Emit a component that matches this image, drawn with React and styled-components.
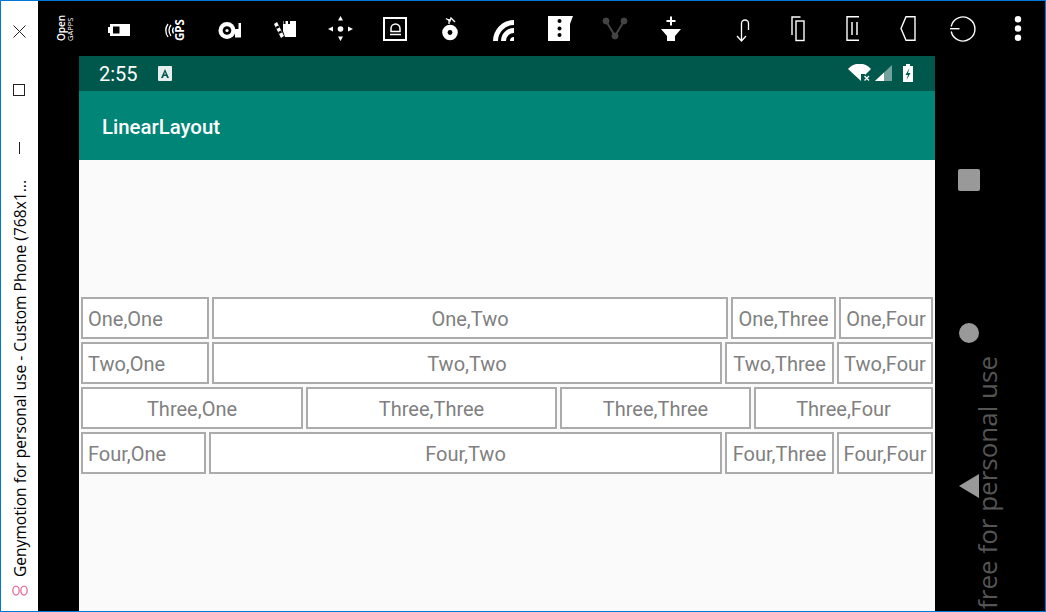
import React from "react";
import styled, { createGlobalStyle } from "styled-components";

const GlobalStyle = createGlobalStyle`
  html, body {
    margin: 0;
    padding: 0;
    background: #000;
  }
`;

const Frame = styled.div`
  display: flex;
  box-sizing: border-box;
  position: relative;
  width: 1046px;
  height: 612px;
  overflow: hidden;
  border: 1px solid #0078d7;
  background: #000;
`;

const TitleBar = styled.div`
  display: flex;
  flex-direction: column;
  align-items: center;
  flex: 0 0 37px;
  background: #fff;
`;

const WindowButton = styled.svg`
  flex: none;
  width: 37px;
  height: ${(p) => p.$h}px;
`;

const TitleText = styled.div`
  display: flex;
  align-items: center;
  gap: 8px;
  margin-top: 21px;
  writing-mode: vertical-rl;
  transform: rotate(180deg);
  font-family: "Open Sans", sans-serif;
  font-size: 15.6px;
  color: #000;
  white-space: nowrap;
`;

const Main = styled.div`
  display: flex;
  flex-direction: column;
  flex: 1;
  min-width: 0;
`;

const ToolBar = styled.div`
  display: flex;
  justify-content: space-between;
  flex: 0 0 55px;
`;

const ToolGroup = styled.div`
  display: flex;
`;

const Body = styled.div`
  display: flex;
  flex: 1;
  min-height: 0;
`;

const Gutter = styled.div`
  flex: 0 0 41px;
`;

const Phone = styled.div`
  display: flex;
  flex-direction: column;
  flex: 0 0 856px;
  background: #fafafa;
`;

const StatusBar = styled.div`
  display: flex;
  align-items: center;
  flex: 0 0 35px;
  padding-left: 20px;
  background: #00574b;
  color: #fff;
  font-family: Roboto, sans-serif;
  font-size: 20px;
`;

const Clock = styled.span`
  width: 59px;
`;

const AppBar = styled.div`
  display: flex;
  align-items: center;
  flex: 0 0 69px;
  padding: 2px 0 0 23px;
  box-sizing: border-box;
  background: #008577;
  color: #fff;
  font-family: Roboto, sans-serif;
  font-size: 20.4px;
  font-weight: 500;
`;

const Content = styled.div`
  display: flex;
  flex-direction: column;
  gap: 3px;
  flex: 1;
  padding: 137px 2px 0;
`;

const Row = styled.div`
  display: flex;
  gap: 3px;
`;

const Cell = styled.div`
  display: flex;
  align-items: center;
  justify-content: ${(p) => (p.$left ? "flex-start" : "center")};
  box-sizing: border-box;
  flex: 0 0 ${(p) => p.$w}px;
  height: 42px;
  padding: 2px 0 0 ${(p) => (p.$left ? 5 : 0)}px;
  border: 2px solid #ababab;
  background: #fff;
  color: #808080;
  font-family: Roboto, sans-serif;
  font-size: 20px;
  white-space: nowrap;
`;

const NavColumn = styled.div`
  display: flex;
  flex-direction: column;
  align-items: center;
  flex: 0 0 68px;
  padding-top: 113px;
`;

const NavSquare = styled.div`
  width: 22px;
  height: 22px;
  border-radius: 2px;
  background: #999;
`;

const NavCircle = styled.div`
  width: 20px;
  height: 20px;
  margin-top: 132px;
  border-radius: 50%;
  background: #999;
`;

const NavBack = styled.div`
  width: 20px;
  height: 24px;
  margin-top: 131px;
  background: #999;
  clip-path: polygon(100% 0, 100% 100%, 0 50%);
`;

const Watermark = styled.div`
  position: absolute;
  right: 43px;
  top: 355px;
  writing-mode: vertical-rl;
  transform: rotate(180deg);
  font-family: "Open Sans", sans-serif;
  font-size: 26px;
  font-weight: 500;
  line-height: 30px;
  color: #555;
  white-space: nowrap;
`;

const Slot = styled.svg`
  flex: none;
  width: 55px;
  height: 55px;
`;

const SlotLabel = styled.text`
  font-family: "Open Sans", sans-serif;
  font-weight: ${(p) => p.$weight || 600};
  font-size: ${(p) => p.$size}px;
  fill: #fff;
`;

const Tool = ({ x, children }) => (
  <Slot viewBox={`${x} 1 55 55`}>{children}</Slot>
);

const rows = [
  [["One,One", 128, true], ["One,Two", 516], ["One,Three", 105], ["One,Four", 94]],
  [["Two,One", 128, true], ["Two,Two", 510], ["Two,Three", 109], ["Two,Four", 96]],
  [["Three,One", 222], ["Three,Three", 251], ["Three,Three", 191], ["Three,Four", 179]],
  [["Four,One", 125, true], ["Four,Two", 513], ["Four,Three", 109], ["Four,Four", 96]],
];

const leftTools = [
  <>
    <SlotLabel $size={10} x={0} y={0} transform="translate(65 41) rotate(-90)">Open</SlotLabel>
    <SlotLabel $size={7.5} $weight={400} x={0} y={0} transform="translate(73 41) rotate(-90)">GAPPS</SlotLabel>
  </>,
  <>
    <path d="M110 24h20v12h-20v-3h-2v-6h2z" fill="#fff" />
    <rect x="113" y="26.5" width="6.5" height="7" fill="#000" />
  </>,
  <>
    <g fill="none" stroke="#fff" strokeWidth="1.300">
      <path d="M171 25q-4 5 0 11" />
      <path d="M168 24q-4.500 6 0 13" />
      <path d="M173.500 27.500q-2 3 0 6" />
    </g>
    <SlotLabel $size={11.5} $weight={700} x={0} y={0} transform="translate(183.500 41) rotate(-90)">GPS</SlotLabel>
  </>,
  <>
    <circle cx="227" cy="30.500" r="8.500" fill="#fff" />
    <circle cx="227" cy="30.500" r="4.300" fill="#000" />
    <circle cx="227" cy="30.500" r="1.600" fill="#fff" />
    <path d="M235 29h3.500v-6h2.500v14.500h-6z" fill="#fff" />
  </>,
  <>
    <path d="M283 21h13v16h-11l-2-6z" fill="#fff" />
    <path d="M283.500 21v3h2v-3zM288 21v3h2v-3z" fill="#000" />
    <path d="M274 24l3-2 7 14-3 2z" fill="#fff" />
    <path d="M275.500 27l3-1.500 1 2-3 1.500zM278 32l3-1.500 1 2-3 1.500z" fill="#000" />
  </>,
  <>
    <circle cx="340.500" cy="29" r="2.800" fill="#fff" />
    <path d="M340.500 16l2.500 4.500h-5zM340.500 41l-2.500-4.500h5zM328 29l5-2.500v5zM353 29l-5-2.500v5z" fill="#fff" />
  </>,
  <>
    <rect x="384" y="18" width="22" height="22" fill="none" stroke="#fff" strokeWidth="2" />
    <path d="M391 31.500v-3a4.500 4.500 0 0 1 9 0v3z" fill="none" stroke="#fff" strokeWidth="1.500" />
    <path d="M390 34.500h11" stroke="#fff" strokeWidth="1.500" />
  </>,
  <>
    <path d="M446 18.500l4 2.500 1-3 4 4M449 19v5" fill="none" stroke="#fff" strokeWidth="1.300" />
    <circle cx="450" cy="32.500" r="7.800" fill="#fff" />
    <circle cx="450" cy="32.500" r="2.400" fill="#000" />
  </>,
  <>
    <path d="M493 41a21 21 0 0 1 21-21v5a16 16 0 0 0-16 16z" fill="#fff" />
    <path d="M501 41a13 13 0 0 1 13-13v5a8 8 0 0 0-8 8z" fill="#fff" />
    <path d="M510 41a4 4 0 0 1 4-4v4z" fill="#fff" />
  </>,
  <>
    <path d="M548 16h25l-3 8v17h-22z" fill="#fff" />
    <circle cx="559.500" cy="21" r="2" fill="#000" />
    <circle cx="559.500" cy="28.500" r="2" fill="#000" />
    <circle cx="559.500" cy="35" r="2" fill="#000" />
  </>,
  <g fill="#444" stroke="#444">
    <path d="M606 21l9 15 9-15" fill="none" strokeWidth="2" />
    <circle cx="606" cy="21" r="3" />
    <circle cx="624" cy="21" r="3" />
    <circle cx="615" cy="36" r="3" />
  </g>,
  <>
    <path d="M671 16.500v9M666.500 21h9" stroke="#fff" strokeWidth="2" />
    <path d="M661 29h20l-6 7v5h-8v-5z" fill="#fff" />
  </>,
];

const rightTools = [
  <path d="M737 36l4.500 5 4.500-5M741.500 41V23.500a3.500 3.500 0 0 1 7 0V30" fill="none" stroke="#fff" strokeWidth="1.300" />,
  <g fill="none" stroke="#fff" strokeWidth="1.400">
    <path d="M800.500 17h-8.500v18" />
    <rect x="796" y="21" width="8" height="19.500" />
  </g>,
  <g fill="none" stroke="#fff" strokeWidth="1.400">
    <path d="M859 16.700h-12v23.600h12" />
    <path d="M852 22v13M857 22v13" stroke="#bbb" strokeWidth="2" />
  </g>,
  <path d="M915 16.700h-9l-5 11.800 5 11.800h9z" fill="none" stroke="#fff" strokeWidth="1.400" />,
  <g fill="none" stroke="#fff" strokeWidth="1.400">
    <path d="M951.200 26.500a12 12 0 1 1 0 5" />
    <path d="M950 28.700h9.500" />
  </g>,
  <g fill="#fff">
    <circle cx="1018" cy="19.300" r="3.200" />
    <circle cx="1018" cy="28.500" r="3.200" />
    <circle cx="1018" cy="37.800" r="3.200" />
  </g>,
];

const NotificationIcon = styled.svg`
  flex: none;
  width: 14px;
  height: 16px;
  margin-right: auto;
`;

const StatusIcons = styled.svg`
  flex: none;
  width: 70px;
  height: 20px;
  margin-right: 17px;
`;

const LogoMark = styled.svg`
  flex: none;
  margin-right: 1px;
`;

export default function App() {
  return (
    <>
      <GlobalStyle />
      <Frame>
        <TitleBar>
          <WindowButton $h={59} viewBox="0 0 37 59">
            <path d="M12.500 24.500l12 12M24.500 24.500l-12 12" stroke="#222" strokeWidth="1" />
          </WindowButton>
          <WindowButton $h={59} viewBox="0 0 37 59">
            <rect x="12.500" y="24.500" width="11" height="11" fill="none" stroke="#222" />
          </WindowButton>
          <WindowButton $h={40} viewBox="0 0 37 40">
            <path d="M18.500 23v12" stroke="#222" />
          </WindowButton>
          <TitleText>
            <LogoMark width="16" height="11" viewBox="0 0 16 11">
              <ellipse cx="4" cy="5.500" rx="3.200" ry="4.500" fill="none" stroke="#e86d9a" strokeWidth="1.300" />
              <ellipse cx="12" cy="5.500" rx="3.200" ry="4.500" fill="none" stroke="#e86d9a" strokeWidth="1.300" />
            </LogoMark>
            <span>Genymotion for personal use - Custom Phone (768x1...</span>
          </TitleText>
        </TitleBar>
        <Main>
          <ToolBar>
            <ToolGroup>
              {leftTools.map((tool, i) => (
                <Tool key={i} x={38 + 55 * i}>{tool}</Tool>
              ))}
            </ToolGroup>
            <ToolGroup>
              {rightTools.map((tool, i) => (
                <Tool key={i} x={715 + 55 * i}>{tool}</Tool>
              ))}
            </ToolGroup>
          </ToolBar>
          <Body>
            <Gutter />
            <Phone>
              <StatusBar>
                <Clock>2:55</Clock>
                <NotificationIcon viewBox="0 0 14 16">
                  <rect width="14" height="15" rx="1" fill="#e6efed" />
                  <path d="M3 12L7 3l4 9H9l-.7-2H5.700L5 12zM6.200 8.500h1.600L7 6z" fill="#00574b" fillRule="evenodd" />
                </NotificationIcon>
                <StatusIcons viewBox="0 0 70 20">
                  <path d="M0 5a15 15 0 0 1 23 0l-6 6v-1h-4v7z" fill="#fff" />
                  <path d="M16.500 12l4.500 4.500M21 12l-4.500 4.500" stroke="#fff" strokeWidth="1.300" />
                  <path d="M27 17L44 1v16z" fill="#fff" opacity="0.45" />
                  <path d="M27 17L36 8.500V17z" fill="#fff" />
                  <path d="M55 2h3V0h4v2h3v16H55z" fill="#fff" />
                  <path d="M61.500 4L57.500 11h2.500l-1.500 5 4-7H60z" fill="#00574b" />
                </StatusIcons>
              </StatusBar>
              <AppBar>LinearLayout</AppBar>
              <Content>
                {rows.map((row, i) => (
                  <Row key={i}>
                    {row.map(([label, w, left], j) => (
                      <Cell key={j} $w={w} $left={left}>{label}</Cell>
                    ))}
                  </Row>
                ))}
              </Content>
            </Phone>
            <NavColumn>
              <NavSquare />
              <NavCircle />
              <NavBack />
            </NavColumn>
          </Body>
        </Main>
        <Watermark>free for personal use</Watermark>
      </Frame>
    </>
  );
}
